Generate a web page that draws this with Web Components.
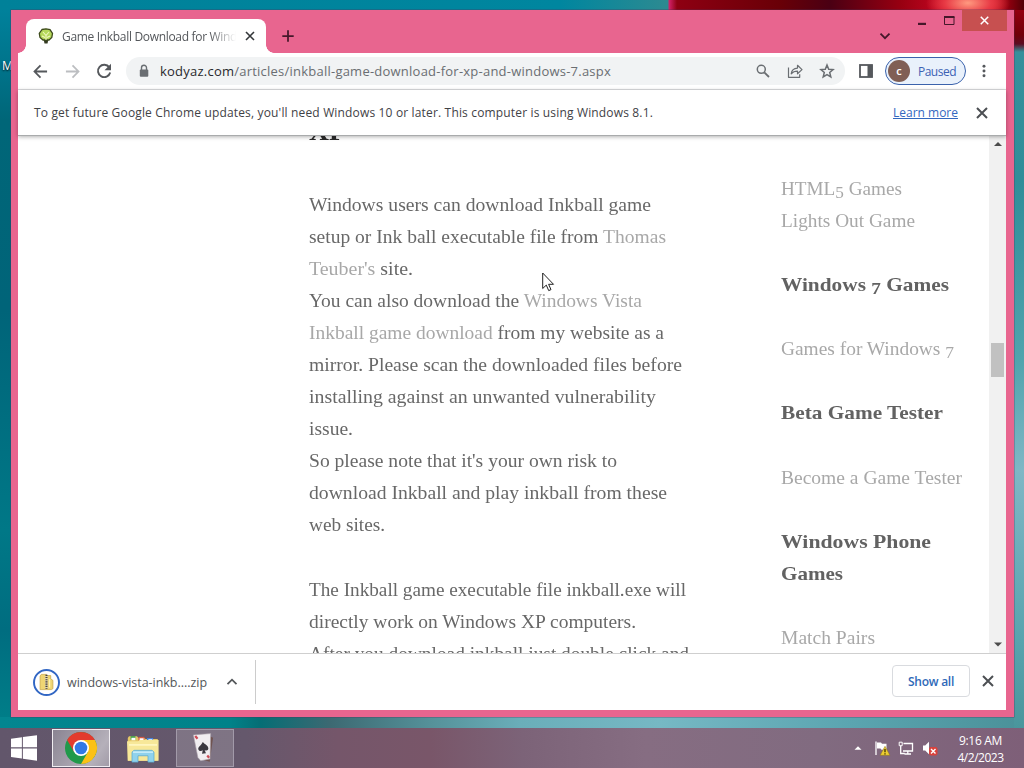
<!DOCTYPE html>
<html lang="en">
<head>
<meta charset="utf-8">
<title>Game Inkball Download</title>
<style>
  body {
    margin: 0;
    overflow: hidden;
    font-family: "Open Sans", "Noto Sans", sans-serif;
    font-size: 12px;
    color: #3c4043;
  }
</style>
</head>
<body>
<desktop-shell></desktop-shell>

<script>
class BaseElement extends HTMLElement {
  constructor() {
    super();
    this.attachShadow({ mode: 'open' });
    const template = document.createElement('template');
    template.innerHTML = `<style>${this.getStyles()}</style>${this.getTemplate()}`;
    this.shadowRoot.appendChild(template.content.cloneNode(true));
  }
  getStyles() { return ''; }
  getTemplate() { return '<slot></slot>'; }
}

// One line of text that takes up exactly "width" pixels.
// Small interface text is tracked, page text (in FitLine) has its letters widened.
class FitText extends BaseElement {
  getStyles() {
    return `
      :host { display: block; white-space: nowrap; }
      span { display: inline-block; transform-origin: 0 50%; }
    `;
  }
  getTemplate() { return '<span><slot></slot></span>'; }
  connectedCallback() {
    const span = this.shadowRoot.querySelector('span');
    const width = Number(this.getAttribute('width'));
    const natural = span.getBoundingClientRect().width;
    if (width && natural) {
      this.fit(span, width, natural);
    }
  }
  fit(span, width, natural) {
    span.style.letterSpacing = (width - natural) / this.textContent.length + 'px';
  }
}
customElements.define('fit-text', FitText);

class FitLine extends FitText {
  fit(span, width, natural) {
    span.style.transform = `scaleX(${width / natural})`;
  }
}
customElements.define('fit-line', FitLine);

const ICONS = {
  close: '<path d="M4 4l8 8M12 4l-8 8" stroke="currentColor" stroke-width="1.6" fill="none"/>',
  plus: '<path d="M8 1.500v13M1.500 8h13" stroke="currentColor" stroke-width="2" fill="none"/>',
  down: '<path d="M3.500 5.700l4.500 4.500 4.500-4.500" stroke="currentColor" stroke-width="1.8" fill="none"/>',
  up: '<path d="M3.500 10.200l4.500-4.500 4.500 4.500" stroke="currentColor" stroke-width="1.8" fill="none"/>',
  back: '<path d="M15 8H2M8 1.500L1.600 8 8 14.500" stroke="currentColor" stroke-width="1.9" fill="none"/>',
  forward: '<path d="M1 8h13M8 1.500L14.400 8 8 14.500" stroke="currentColor" stroke-width="1.9" fill="none"/>',
  reload: '<path d="M13.300 4.400A6.200 6.200 0 1 0 14.200 9.500" stroke="currentColor" stroke-width="1.9" fill="none"/><path d="M15 .8v6.500H8.500z" fill="currentColor"/>',
  lock: '<rect x="3.800" y="6.500" width="8.500" height="7.300" rx="1" fill="currentColor"/><path d="M5.500 7V4.800a2.500 2.500 0 0 1 5 0V7" stroke="currentColor" stroke-width="1.400" fill="none"/>',
  search: '<circle cx="6.300" cy="6.300" r="4" stroke="currentColor" stroke-width="1.500" fill="none"/><path d="M9.300 9.300l4.700 4.700" stroke="currentColor" stroke-width="1.800"/>',
  share: '<path d="M1.500 4.500v9.800h11.200v-3M4.200 10.800c.5-3.700 2.600-5.600 6.300-5.700V2.300l4.500 4.300-4.500 4.200V8.100C7.800 8.100 5.800 8.900 4.200 10.800z" stroke="currentColor" stroke-width="1.200" fill="none" stroke-linejoin="round"/>',
  star: '<path d="M8 2l1.700 4.200 4.400.4-3.400 2.900 1.100 4.400L8 11.600l-3.800 2.300 1.100-4.400-3.400-2.900 4.400-.4z" stroke="currentColor" stroke-width="1.500" fill="none"/>',
  panel: '<rect x="2" y="2" width="12" height="12" fill="none" stroke="currentColor" stroke-width="1.800"/><rect x="9.500" y="2" width="5" height="12" fill="currentColor"/>',
  dots: '<circle cx="8" cy="2.500" r="1.700" fill="currentColor"/><circle cx="8" cy="8" r="1.700" fill="currentColor"/><circle cx="8" cy="13.500" r="1.700" fill="currentColor"/>',
  minimize: '<rect x="4" y="9.800" width="8" height="2.200" fill="currentColor"/>',
  maximize: '<path d="M3.500 4h9.500v7.500H3.500z" fill="none" stroke="currentColor"/><path d="M3 4h10.500" stroke="currentColor" stroke-width="2"/>',
  triup: '<path d="M4 10l4-4 4 4z" fill="currentColor"/>',
  tridown: '<path d="M4 5.500l4 4 4-4z" fill="currentColor"/>',
  tree: '<path d="M5.500 11h5l-1 4.500h-3z" fill="#333a20"/><path d="M4 1.500L8 .8l4 .9 2.500 3.800-.7 4L11 12H5L2 9.500 1.300 5.500z" fill="#b5d85b" stroke="#3d4a1c" stroke-width="1.300"/><path d="M5 4l3 3.500L11 4M8 7.500V12M4 8l3 1.500M12 8L9 9.500" stroke="#f0f8c0" stroke-width="1.100" fill="none"/>',
  zip: '<circle cx="8" cy="8" r="7.400" fill="#fff" stroke="#3267c4" stroke-width="1.150"/><path d="M4.200 4.200l.7-1h3l.6.700h2v2l1.300.8v5l-.9.500H4.200z" fill="#efd573" stroke="#c4a245" stroke-width=".4"/><path d="M7.200 3.700h1.500v8H7.200z" fill="#ddd3b2"/><path d="M8 3.400v8.300" stroke="#49413a" stroke-width="1.200" stroke-dasharray=".7 .6"/><path d="M9.800 6v5" stroke="#fff3ae" stroke-width=".8"/>',
  windows: '<path d="M0 2.300l6.700-.9v6.200H0zM7.300 1.300L16 .1v7.500H7.300zM0 8.300h6.700v6.200L0 13.600zM7.300 8.300H16v7.500l-8.700-1.200z" fill="#fff"/>',
  chrome: '<circle cx="8" cy="8" r="8" fill="#21994a"/><path d="M8 4h6.930A8 8 0 0 1 8 16l3.460-6z" fill="#fbc116"/><path d="M8 4h6.930A8 8 0 0 0 1.070 4l3.470 6z" fill="#e33b2e"/><circle cx="8" cy="8" r="4" fill="#fff"/><circle cx="8" cy="8" r="3.150" fill="#3179e6"/>',
  folder: '<path d="M.4 2.200l.6-1h4l.7 1h3l.5.600h6.200v12H.4z" fill="#e5c866"/><path d="M1.800 1.200h2.400v2H1.800z" fill="#39a04a"/><path d="M5.700 1.600h3v2h-3z" fill="#d85b43"/><path d="M10 2.200h3v2h-3z" fill="#4382d8"/><path d="M2.200 2h2v1.500h-2zM6.300 2.300h2v1.500h-2zM10.700 2.900h2v1.500h-2z" fill="#fff"/><path d="M0 4h5.500l1-.7h9.300v11.500H.4z" fill="#f7e899"/><path d="M1 6h14" stroke="#fff6bf" stroke-width="1"/><path d="M2.500 15.500V10l1-1h9l1 1v5.500h-3V12h-5v3.500z" fill="#8fd2ed" stroke="#5ba9d0" stroke-width=".4"/><path d="M3 10h10" stroke="#d6f4fb" stroke-width=".7"/>',
  card: '<path d="M10 1.500l2.300 1-1.800 12.800-2.800-.8z" fill="#705451"/><path d="M1.800 1L11 .3l-.3 13.500-5 1L4.200 13z" fill="#f1eef1" stroke="#aaa0aa" stroke-width=".3"/><path d="M6.800 4.800c1.100 1.300 3 1.900 3 3.500 0 .9-1.100 1.400-2 .7l.7 1.800-2.100.3.400-1.900c-1 .8-2.300.3-2.400-.7 0-1.400 1.800-2 2.400-3.700z" fill="#3b3840"/><path d="M2.800 1.600l1.200 1.500M9.200 12l1 1.200" stroke="#cb4b55" stroke-width="1.200"/>',
  flag: '<path d="M2 1.500v13.500" stroke="#fff" stroke-width="1.300"/><path d="M3 2.500h4l1 1.200h4.500v6H7.500l-1-1.200H3z" fill="#fff"/><path d="M11 6.300l4.900 9H6.200z" fill="#edcf32" stroke="#8b7519" stroke-width=".5"/><path d="M11 9v3.300M11 13.200v1.200" stroke="#292000" stroke-width="1.200"/>',
  network: '<path d="M5.500 3.500h9v7.500H5M9.800 11v2.800M6.500 14h6.500M2.700 6v7.500h4" fill="none" stroke="#fff" stroke-width="1.300"/><path d="M1.200 2.200h3v3.500h-3z" fill="none" stroke="#fff"/>',
  volume: '<path d="M1 5.500h2.200L7 1.800v12.400L3.200 10.500H1z" fill="#fff"/><rect x="7" y="7" width="8.500" height="8.500" rx="2" fill="#d9423c"/><path d="M9 9l4.500 4.500M13.500 9L9 13.500" stroke="#fff" stroke-width="1.400"/>'
};

class UiIcon extends BaseElement {
  getStyles() {
    return `
      :host { display: flex; flex: none; align-items: center; justify-content: center; }
      svg { display: block; flex: none; overflow: visible; }
    `;
  }
  getTemplate() { return ''; }
  connectedCallback() {
    const size = this.getAttribute('size') || 16;
    const height = this.getAttribute('height') || size;
    const box = document.createElement('template');
    box.innerHTML = `<svg width="${size}" height="${height}" viewBox="0 0 16 16" preserveAspectRatio="none">${ICONS[this.getAttribute('name')]}</svg>`;
    this.shadowRoot.appendChild(box.content);
  }
}
customElements.define('ui-icon', UiIcon);

class TabStrip extends BaseElement {
  getStyles() {
    return `
      :host { display: flex; height: 43px; padding-left: 8px; align-items: flex-end; color: #45172a; }
      .tab {
        display: flex; align-items: center; width: 240px; height: 34px; box-sizing: border-box;
        padding: 0 8px 0 12px; background: #fff; border-radius: 8px 8px 0 0; color: #54575b;
      }
      .foot { width: 8px; height: 8px; flex: none; }
      .foot.left { margin-left: -8px; background: radial-gradient(circle at 0 0, transparent 7.5px, #fff 8px); }
      .foot.right { background: radial-gradient(circle at 100% 0, transparent 7.5px, #fff 8px); }
      .title { width: 174px; overflow: hidden; margin-left: 8px; -webkit-mask-image: linear-gradient(90deg, #000 85%, transparent); }
      .tab .x { margin-left: auto; color: #34373a; }
      .new { width: 28px; height: 34px; color: #45172a; }
      .list { margin-left: auto; width: 20px; height: 34px; }
      .buttons { display: flex; align-self: flex-start; margin: 0 -1px 0 13px; height: 21px; }
      .buttons ui-icon { width: 27px; height: 21px; }
      .buttons .close { width: 45px; background: #c75050; color: #fff; }
    `;
  }
  getTemplate() {
    return `
      <div class="foot left"></div>
      <div class="tab">
        <ui-icon name="tree"></ui-icon>
        <div class="title"><fit-text width="182">Game Inkball Download for Windo</fit-text></div>
        <ui-icon class="x" name="close"></ui-icon>
      </div>
      <div class="foot right"></div>
      <ui-icon class="new" name="plus" size="14"></ui-icon>
      <ui-icon class="list" name="down"></ui-icon>
      <div class="buttons">
        <ui-icon name="minimize"></ui-icon>
        <ui-icon name="maximize"></ui-icon>
        <ui-icon class="close" name="close" size="15"></ui-icon>
      </div>
    `;
  }
}
customElements.define('tab-strip', TabStrip);

class ToolBar extends BaseElement {
  getStyles() {
    return `
      :host {
        display: flex; align-items: center; height: 36px; padding: 0 4px 0 6px;
        background: #fff; border-bottom: 1px solid #dcdddf; color: #55585c;
      }
      .nav { width: 32px; height: 32px; }
      .off { color: #bcbec1; }
      .omnibox {
        display: flex; flex: none; align-items: center; box-sizing: border-box; width: 719px; height: 28px;
        margin-left: 6px; padding: 0 2px 0 10px; border-radius: 14px; background: #f1f3f4; font-size: 13px; color: #6a6e72;
      }
      .omnibox fit-text { margin-left: 8px; }
      .omnibox b { font-weight: normal; color: #28292c; }
      .tools { display: flex; margin-left: auto; }
      .tools ui-icon { width: 32px; }
      .panel { width: 42px; margin-right: -2px; }
      .pill {
        display: flex; flex: none; align-items: center; box-sizing: border-box; width: 81px; height: 28px;
        padding-left: 2px; border: 1.3px solid #3a62ac; border-radius: 14px; background: #e9f1fb; color: #3c62b4;
      }
      .avatar {
        width: 22px; height: 22px; border-radius: 50%; background: #805f55; color: #fff;
        font-size: 11px; font-weight: 600; line-height: 21px; text-align: center;
      }
      .pill fit-text { margin-left: 8px; }
      .menu { width: 36px; }
    `;
  }
  getTemplate() {
    return `
      <ui-icon class="nav" name="back" size="15"></ui-icon>
      <ui-icon class="nav off" name="forward" size="15"></ui-icon>
      <ui-icon class="nav" name="reload" size="16"></ui-icon>
      <div class="omnibox">
        <ui-icon name="lock"></ui-icon>
        <fit-text width="451"><b>kodyaz.com</b>/articles/inkball-game-download-for-xp-and-windows-7.aspx</fit-text>
        <div class="tools">
          <ui-icon name="search"></ui-icon>
          <ui-icon name="share"></ui-icon>
          <ui-icon name="star"></ui-icon>
        </div>
      </div>
      <ui-icon class="panel" name="panel"></ui-icon>
      <div class="pill"><div class="avatar">c</div><fit-text width="38">Paused</fit-text></div>
      <ui-icon class="menu" name="dots" size="14"></ui-icon>
    `;
  }
}
customElements.define('tool-bar', ToolBar);

class InfoBar extends BaseElement {
  getStyles() {
    return `
      :host {
        display: flex; align-items: center; height: 45px; padding: 0 14px 0 16px; background: #fff; color: #3f4246;
        border-bottom: 1px solid #a9abac; box-shadow: 0 1px 4px rgba(0, 0, 0, .3); z-index: 1;
      }
      .link { margin-left: auto; color: #3368bf; }
      ui-icon { margin-left: 14px; color: #4c4f53; }
    `;
  }
  getTemplate() {
    return `
      <fit-text width="619">To get future Google Chrome updates, you'll need Windows 10 or later. This computer is using Windows 8.1.</fit-text>
      <fit-text class="link" width="65"><u>Learn more</u></fit-text>
      <ui-icon name="close" size="20"></ui-icon>
    `;
  }
}
customElements.define('info-bar', InfoBar);

class PageView extends BaseElement {
  getStyles() {
    return `
      :host {
        display: flex; height: 517px; overflow: hidden; background: #fff;
        font-family: Georgia, "Liberation Serif", serif; font-size: 19px; line-height: 32px; color: #686868;
      }
      article { flex: none; width: 472px; padding-left: 291px; }
      aside { flex: 1; padding-top: 37px; }
      h2 { margin: -21px 0 42px; font-size: 28px; line-height: 32px; color: #2b2b2b; }
      p { margin: 0 0 33px; }
      a { color: #a8a8a8; }
      h3 { margin: 32px 0; font-size: 19px; line-height: 32.300px; color: #626262; }
      .low { font-size: .9em; vertical-align: -.16em; line-height: 0; }
      .bar { display: flex; flex-direction: column; align-items: center; width: 17px; background: #f1f1f1; color: #4c4c4c; }
      .thumb { width: 13px; height: 34px; margin: 191px 0 auto; background: #c1c1c1; }
    `;
  }
  getTemplate() {
    return `
      <article>
        <h2><fit-line width="37">XP</fit-line></h2>
        <p>
          <fit-line width="342">Windows users can download Inkball game</fit-line>
          <fit-line width="357">setup or Ink ball executable file from <a>Thomas</a></fit-line>
          <fit-line width="104"><a>Teuber's</a> site.</fit-line>
          <fit-line width="333">You can also download the <a>Windows Vista</a></fit-line>
          <fit-line width="355"><a>Inkball game download</a> from my website as a</fit-line>
          <fit-line width="373">mirror. Please scan the downloaded files before</fit-line>
          <fit-line width="347">installing against an unwanted vulnerability</fit-line>
          <fit-line width="44">issue.</fit-line>
          <fit-line width="308">So please note that it's your own risk to</fit-line>
          <fit-line width="358">download Inkball and play inkball from these</fit-line>
          <fit-line width="76">web sites.</fit-line>
        </p>
        <p>
          <fit-line width="377">The Inkball game executable file inkball.exe will</fit-line>
          <fit-line width="327">directly work on Windows XP computers.</fit-line>
          <fit-line width="380">After you download inkball just double click and</fit-line>
        </p>
      </article>
      <aside>
        <a><fit-line width="121">HTML<span class="low">5</span> Games</fit-line></a>
        <a><fit-line width="134">Lights Out Game</fit-line></a>
        <h3><fit-line width="168">Windows <span class="low">7</span> Games</fit-line></h3>
        <a><fit-line width="173">Games for Windows <span class="low">7</span></fit-line></a>
        <h3><fit-line width="162">Beta Game Tester</fit-line></h3>
        <a><fit-line width="181">Become a Game Tester</fit-line></a>
        <h3><fit-line width="150">Windows Phone</fit-line><fit-line width="62">Games</fit-line></h3>
        <a><fit-line width="94">Match Pairs</fit-line></a>
      </aside>
      <div class="bar">
        <ui-icon name="triup" height="16"></ui-icon>
        <div class="thumb"></div>
        <ui-icon name="tridown" height="16"></ui-icon>
      </div>
    `;
  }
}
customElements.define('page-view', PageView);

class DownloadShelf extends BaseElement {
  getStyles() {
    return `
      :host {
        display: flex; align-items: center; height: 56px; box-sizing: content-box;
        border-top: 1px solid #cfcfcf; background: #fff; color: #54575a;
      }
      .item {
        display: flex; align-items: center; box-sizing: border-box; width: 238px; height: 44px;
        padding: 0 15px; border-right: 1px solid #ccc;
      }
      .item fit-text { margin-left: 7px; font-size: 12.500px; }
      .item .menu { margin-left: auto; }
      .all {
        display: flex; align-items: center; justify-content: center; box-sizing: border-box; width: 78px; height: 32px;
        margin: -2px 8px 0 auto; border: 1px solid #d9dbdf; border-radius: 4px; color: #2f69b8; font-weight: 600;
      }
      .x { margin: -2px 8px 0 0; color: #4c4f53; }
    `;
  }
  getTemplate() {
    return `
      <div class="item">
        <ui-icon name="zip" size="27"></ui-icon>
        <fit-text width="140">windows-vista-inkb....zip</fit-text>
        <ui-icon class="menu" name="up"></ui-icon>
      </div>
      <div class="all"><fit-text width="46">Show all</fit-text></div>
      <ui-icon class="x" name="close" size="20"></ui-icon>
    `;
  }
}
customElements.define('download-shelf', DownloadShelf);

class BrowserWindow extends BaseElement {
  getStyles() {
    return `
      :host {
        display: flex; flex-direction: column; box-sizing: border-box;
        padding: 0 8px 7px 7px; background: #e8658f;
        box-shadow: 0 0 0 .5px rgba(80, 50, 90, .6);
      }
    `;
  }
}
customElements.define('browser-window', BrowserWindow);

class TaskBar extends BaseElement {
  getStyles() {
    return `
      :host {
        display: flex; align-items: center; height: 40px; color: #fff;
        background: linear-gradient(90deg, #62566b 0, #65586c 24%, #75566a 33%, #795669 42%, #7c6378 51%, #866d82 63%, #816b80 80%, #7e5f78 100%);
      }
      .start { width: 48px; }
      .app { box-sizing: border-box; width: 58px; height: 38px; margin-left: 4px; }
      .open { border: 1px solid #a29aa9; background: rgba(255, 255, 255, .17); }
      .active { border-color: #f0edf1; background: linear-gradient(125deg, #8a8492, #b5b0ba 75%, #a29ca8); }
      .tray { display: flex; align-items: center; margin-left: auto; }
      .tray ui-icon { width: 24px; }
      .clock { display: flex; flex-direction: column; align-items: center; width: 45px; margin: 2px 21px 0 16px; line-height: 17px; }
    `;
  }
  getTemplate() {
    return `
      <ui-icon class="start" name="windows" size="26"></ui-icon>
      <ui-icon class="app open active" name="chrome" size="32"></ui-icon>
      <ui-icon class="app" name="folder" size="32" height="29"></ui-icon>
      <ui-icon class="app open" name="card" size="30"></ui-icon>
      <div class="tray">
        <ui-icon name="triup" size="14"></ui-icon>
        <ui-icon name="flag"></ui-icon>
        <ui-icon name="network"></ui-icon>
        <ui-icon name="volume"></ui-icon>
        <div class="clock"><fit-text width="43">9:16 AM</fit-text><fit-text width="46">4/2/2023</fit-text></div>
      </div>
    `;
  }
}
customElements.define('task-bar', TaskBar);

class DesktopShell extends BaseElement {
  getStyles() {
    return `
      :host {
        display: flex; flex-direction: column; justify-content: flex-end; position: relative;
        width: 1024px; height: 768px; overflow: hidden;
        background:
          radial-gradient(ellipse 42px 20px at 968px 3px, #ff9a80, #e83a45 55%, transparent) no-repeat,
          linear-gradient(90deg, transparent 668px, #d3226a 669px, #8e0012 677px, #690007 780px, #4a0013 830px, #970011 900px, #c10620 940px, #e9232f 985px, #92000f 1008px, #500006) 0 0 / 1024px 10px no-repeat,
          linear-gradient(#a20012, #700008 35px, #5b0c22 44px, #35909b 52px, #2f8e99 180px, #50a4ad 360px, #7fb7c5 470px, #58a4ae 640px, #4a969c 728px) 1014px 0 / 10px 728px no-repeat,
          linear-gradient(90deg, #038690 0, #018289 230px, #056e75 260px, #3c6972 330px, #559199 430px, #6aaeb9 520px, #76b8c4 660px, #5ba5b0 850px, #4a9199 1024px) 0 717px / 1024px 11px no-repeat,
          linear-gradient(#00819b, #00738a 60px, #006678 110px, #006479 300px, #007887 520px, #006d80 620px, #00818a 728px) 0 10px / 11px 708px no-repeat,
          linear-gradient(90deg, #008199, #00869f 560px, #2c8a91 665px);
      }
      .label { position: absolute; left: 2px; top: 58px; color: #fff; line-height: 16px; text-shadow: 0 1px 2px #000; }
      browser-window { position: absolute; left: 11px; top: 10px; width: 1003px; height: 707px; }
    `;
  }
  getTemplate() {
    return `
      <div class="label">M</div>
      <browser-window>
        <tab-strip></tab-strip>
        <tool-bar></tool-bar>
        <info-bar></info-bar>
        <page-view></page-view>
        <download-shelf></download-shelf>
      </browser-window>
      <task-bar></task-bar>
      <mouse-pointer></mouse-pointer>
    `;
  }
}

class MousePointer extends BaseElement {
  getStyles() {
    return `
      :host { display: block; position: absolute; left: 542px; top: 272px; }
      svg { display: block; }
    `;
  }
  getTemplate() {
    return `
      <svg width="13" height="20" viewBox="0 0 13 20">
        <path d="M.7 1v15.500l3.600-3.400 2.400 5.500 2.300-1-2.400-5.300h4.900z" fill="#fff" stroke="#222" stroke-width="1"/>
      </svg>
    `;
  }
}
customElements.define('mouse-pointer', MousePointer);
customElements.define('desktop-shell', DesktopShell);
</script>
</body>
</html>
